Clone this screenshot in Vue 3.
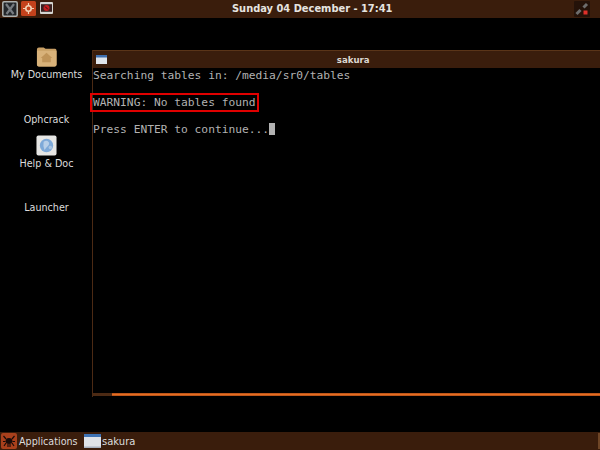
<script setup>
const icons = [
  { label: 'My Documents', kind: 'folder', top: 46 },
  { label: 'Ophcrack', kind: '', top: 91 },
  { label: 'Help & Doc', kind: 'help', top: 135 },
  { label: 'Launcher', kind: '', top: 179 }
]
</script>

<template>
  <div class="screen">
    <header class="top-panel">
      <div class="launchers">
        <svg class="launch" width="16" height="16" viewBox="0 0 16 16">
          <rect x="0.8" y="0.8" width="14.4" height="14.4" rx="1.2" fill="#23262a" stroke="#aeb0ae" stroke-width="1.5" />
          <path d="M4 3L11.5 13M12 3L4.5 13" stroke="#777b80" stroke-width="2.2" />
        </svg>
        <svg class="launch" width="15" height="15" viewBox="0 0 15 15">
          <rect width="15" height="15" rx="1.5" fill="#c4421c" />
          <circle cx="7.5" cy="7.5" r="2.7" fill="none" stroke="#f2d2b6" stroke-width="1.6" />
          <path d="M7.5 2V5M7.5 10V13M2 7.5H5M10 7.5H13" stroke="#f2d2b6" stroke-width="1.2" />
        </svg>
        <svg class="launch third" width="13" height="12" viewBox="0 0 13 12">
          <rect width="13" height="12" rx="1" fill="#d4d4d0" />
          <rect x="1" y="2.2" width="11" height="7.6" fill="#3a2020" />
          <circle cx="6.5" cy="6" r="3" fill="#c81e1e" />
          <path d="M5 4.5L8 7.5" stroke="#2a1010" stroke-width="1" />
        </svg>
      </div>
      <div class="clock">Sunday 04 December - 17:41</div>
      <div class="tray">
        <svg width="16" height="16" viewBox="0 0 16 16">
          <rect width="16" height="16" rx="1" fill="#241209" />
          <path d="M9.5 6.5L13 3" stroke="#6d6d6d" stroke-width="3" />
          <path d="M2.5 13L6.5 9" stroke="#6d6d6d" stroke-width="3" />
          <rect x="9.5" y="9.5" width="4" height="4" fill="#e0302a" />
        </svg>
      </div>
    </header>

    <main class="desktop">
      <div v-for="icon in icons" :key="icon.label" class="desk-icon" :style="{ top: icon.top - 18 + 'px' }">
        <div class="glyph">
          <svg v-if="icon.kind === 'folder'" width="21" height="21" viewBox="0 0 22 22">
            <path d="M1 3.5Q1 1.5 3 1.5H8L10 3H20Q21.5 3 21.5 5V19.5Q21.5 21.5 19.5 21.5H3Q1 21.5 1 19.5Z" fill="#c9a066" />
            <path d="M1 5H21.5V19.5Q21.5 21.5 19.5 21.5H3Q1 21.5 1 19.5Z" fill="#d8b27a" />
            <path d="M11 7L17 12.5H15.5V17H6.5V12.5H5Z" fill="#bf9459" />
          </svg>
          <svg v-else-if="icon.kind === 'help'" width="21" height="21" viewBox="0 0 22 22">
            <rect x="0.5" y="0.5" width="21" height="21" rx="2" fill="#e6e6e4" />
            <circle cx="11" cy="11" r="7" fill="#7ea9d8" />
            <path d="M8 7Q11 5 13 7T12 12T9 16Q7 12 8 7Z" fill="#b8cfe8" />
            <circle cx="15" cy="13" r="1.8" fill="#aac5e2" />
          </svg>
        </div>
        <div class="desk-label">{{ icon.label }}</div>
      </div>

      <section class="window">
        <div class="titlebar">
          <svg class="win-icon" width="11" height="9" viewBox="0 0 11 9">
            <rect width="11" height="9" fill="#dfe5ec" />
            <rect width="11" height="2.5" fill="#3f6fae" />
          </svg>
          <span class="win-title">sakura</span>
        </div>
        <div class="terminal">
          <div class="line">Searching tables in: /media/sr0/tables</div>
          <div class="line">&nbsp;</div>
          <div class="line">WARNING: No tables found</div>
          <div class="line">&nbsp;</div>
          <div class="line">Press ENTER to continue...<span class="cursor"></span></div>
          <div class="highlight"></div>
        </div>
        <div class="win-bottom">
          <div class="grip"></div>
          <div class="resize"></div>
        </div>
      </section>
    </main>

    <footer class="bottom-panel">
      <div class="apps">
        <svg width="18" height="18" viewBox="0 0 18 18">
          <rect x="1" y="1" width="16" height="16" rx="2" fill="#a8401c" />
          <ellipse cx="9" cy="9" rx="3.4" ry="3" fill="#180c0a" />
          <path d="M6 7L3.5 4M12 7L14.5 4M5.5 9.5L3 9.5M12.5 9.5H15M6 11L4 14M12 11L14 14M8 12V15M10 12V15" stroke="#180c0a" stroke-width="1.2" />
        </svg>
        <span>Applications</span>
      </div>
      <div class="task">
        <svg width="17" height="14" viewBox="0 0 17 14">
          <rect width="17" height="14" fill="#dfe3e8" />
          <rect width="17" height="3" fill="#3f73b4" />
          <rect y="12.5" width="17" height="1.5" fill="#a7b2c0" />
        </svg>
        <span>sakura</span>
      </div>
      <div class="panel-end"></div>
    </footer>
  </div>
</template>

<style>
html, body { margin: 0; background: #000; }
</style>

<style scoped>
.screen {
  width: 600px;
  height: 450px;
  display: flex;
  flex-direction: column;
  background: #000;
  overflow: hidden;
  font-family: "DejaVu Sans", sans-serif;
}
.top-panel {
  height: 18px;
  flex: none;
  background: #3a1d0c;
  display: flex;
  align-items: flex-start;
  position: relative;
}
.launchers {
  display: flex;
  align-items: flex-start;
  gap: 3px;
  padding: 1px 0 0 2px;
}
.launch { flex: none; }
.third { margin: 1px 0 0 1px; }
.clock {
  position: absolute;
  left: 232px;
  top: 2px;
  font-size: 9.9px;
  line-height: 14px;
  font-weight: 700;
  color: #e6e4e0;
  white-space: nowrap;
}
.tray { margin-left: auto; padding: 1px 10px 0 0; display: flex; }
.desktop { flex: 1; position: relative; }
.desk-icon {
  position: absolute;
  left: 0;
  width: 93px;
  display: flex;
  flex-direction: column;
  align-items: center;
}
.glyph { height: 22px; display: flex; }
.desk-label {
  font-size: 9.6px;
  line-height: 14px;
  color: #dcdcdc;
  white-space: nowrap;
}
.window {
  position: absolute;
  left: 91.5px;
  top: 32px;
  width: 508.5px;
  height: 347px;
  display: flex;
  flex-direction: column;
  box-sizing: border-box;
  border-left: 1px solid #4c2a14;
}
.titlebar {
  height: 18px;
  flex: none;
  background: #3a1d0c;
  border-top: 1px solid #5a3418;
  box-sizing: border-box;
  display: flex;
  align-items: center;
  justify-content: center;
  position: relative;
}
.win-icon { position: absolute; left: 3px; top: 4px; }
.win-title {
  font-size: 8.6px;
  font-weight: 700;
  color: #dcd8d2;
  padding-left: 14px;
}
.terminal {
  flex: 1;
  background: #000;
  padding: 1px 0 0 0.5px;
  position: relative;
  font-family: "DejaVu Sans Mono", monospace;
  font-size: 11.25px;
  line-height: 13.4px;
  color: #b2b2b2;
  white-space: pre;
}
.line { height: 13.4px; }
.cursor {
  display: inline-block;
  width: 6px;
  height: 12px;
  background: #b2b2b2;
  vertical-align: -2px;
}
.highlight {
  position: absolute;
  left: -2.5px;
  top: 25px;
  width: 169px;
  height: 19px;
  box-sizing: border-box;
  border: 2px solid #e00000;
}
.win-bottom { height: 4px; display: flex; flex: none; background: #000; }
.grip { width: 19px; height: 3px; background: #4c2a14; }
.resize {
  flex: 1;
  height: 3px;
  background: linear-gradient(#a84c18, #e66c20 50%, #a84c18);
}
.bottom-panel {
  height: 18px;
  flex: none;
  background: #3a1d0c;
  display: flex;
  align-items: center;
  font-size: 9.6px;
  color: #dcdcdc;
}
.apps { display: flex; align-items: center; gap: 1px; width: 84px; flex: none; }
.task { display: flex; align-items: center; gap: 1px; font-size: 10px; }
.panel-end {
  margin-left: auto;
  width: 2px;
  height: 16px;
  background: #6e4526;
}
</style>
